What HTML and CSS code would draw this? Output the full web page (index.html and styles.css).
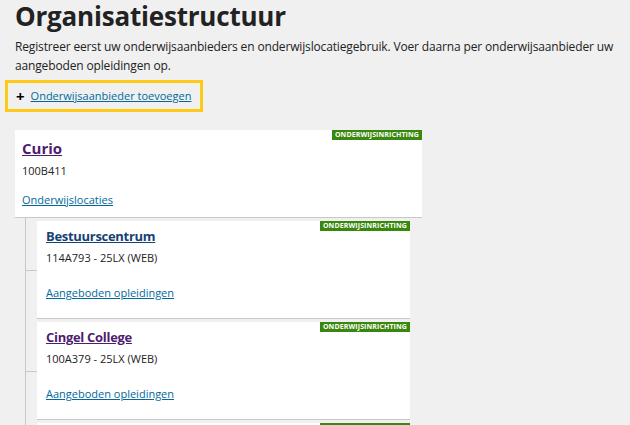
FILE: index.html
```html
<!DOCTYPE html>
<html lang="nl">
<head>
    <meta charset="UTF-8">
    <title>Organisatiestructuur</title>
    <link rel="stylesheet" href="styles.css">
</head>
<body>
    <div class="page">
        <h1>Organisatiestructuur</h1>
        <p class="intro">Registreer eerst uw onderwijsaanbieders en onderwijslocatiegebruik. Voer daarna per onderwijsaanbieder uw aangeboden opleidingen op.</p>

        <div class="add-box">
            <span class="plus">+</span>
            <a href="#" class="link">Onderwijsaanbieder toevoegen</a>
        </div>

        <!-- Tree of providers -->
        <div class="tree">
            <div class="card provider">
                <span class="badge">ONDERWIJSINRICHTING</span>
                <a href="#" class="card-title visited">Curio</a>
                <div class="code">100B411</div>
                <a href="#" class="link small">Onderwijslocaties</a>
            </div>

            <div class="children">
                <div class="card child">
                    <span class="badge">ONDERWIJSINRICHTING</span>
                    <a href="#" class="card-title">Bestuurscentrum</a>
                    <div class="code">114A793 - 25LX (WEB)</div>
                    <a href="#" class="link small">Aangeboden opleidingen</a>
                </div>
                <div class="card child">
                    <span class="badge">ONDERWIJSINRICHTING</span>
                    <a href="#" class="card-title visited">Cingel College</a>
                    <div class="code">100A379 - 25LX (WEB)</div>
                    <a href="#" class="link small">Aangeboden opleidingen</a>
                </div>
                <div class="card child">
                    <span class="badge">ONDERWIJSINRICHTING</span>
                    <a href="#" class="card-title visited">Da Vinci College</a>
                    <div class="code">100A380 - 25LX (WEB)</div>
                    <a href="#" class="link small">Aangeboden opleidingen</a>
                </div>
            </div>
        </div>
    </div>
</body>
</html>
```

FILE: styles.css
```css
body {
    margin: 0;
    background-color: #f0f0f0;
    font-family: "Open Sans", "Noto Sans", sans-serif;
    color: #222;
    overflow: hidden;
}
.page {
    padding: 0 15px;
}
h1 {
    margin: 0;
    padding-top: 1px;
    font-size: 26px;
    line-height: 31px;
    font-weight: 700;
    color: #222;
    letter-spacing: -0.2px;
}
.intro {
    margin: 5px 0 0;
    font-size: 12px;
    line-height: 19px;
    letter-spacing: -0.15px;
    color: #222;
}
.link {
    color: #01689b;
    font-size: 11px;
    text-decoration: underline;
}
.add-box {
    display: inline-flex;
    align-items: center;
    gap: 6px;
    margin: 5px 0 0 -10px;
    padding: 5px 9px 6px 8px;
    border: 3px solid #ffc917;
}
.plus {
    font-size: 15px;
    font-weight: 700;
    line-height: 14px;
    color: #000;
}
.tree {
    margin-top: 18px;
}
.card {
    position: relative;
    background-color: #fff;
    border-bottom: 1px solid #c8c8c8;
    display: flex;
    flex-direction: column;
    align-items: flex-start;
}
.provider {
    width: 393px;
    padding: 8px 7px 10px 7px;
}
.badge {
    position: absolute;
    top: 0;
    right: 0;
    background-color: #39870c;
    color: #fff;
    font-size: 7px;
    font-weight: 700;
    line-height: 10px;
    padding: 0 3px;
    letter-spacing: 0.1px;
}
.card-title {
    font-size: 15px;
    font-weight: 700;
    color: #154273;
    line-height: 20px;
}
.card-title.visited {
    color: #4e1d70;
}
.code {
    margin-top: 6px;
    font-size: 11px;
    line-height: 14px;
    color: #222;
}
.provider .link {
    margin-top: 14px;
}
.children {
    margin-left: 10px;
    border-left: 1px solid #c8c8c8;
    padding-left: 11px;
    padding-top: 3px;
}
.child {
    width: 355px;
    padding: 5px 9px 18px 9px;
    margin-bottom: 3px;
}
.child .card-title {
    font-size: 13px;
    line-height: 20px;
    letter-spacing: -0.3px;
}
.child .code {
    margin-top: 5px;
}
.child::before {
    content: "";
    position: absolute;
    left: -12px;
    top: 50%;
    width: 12px;
    height: 1px;
    background-color: #c8c8c8;
}
.child .link {
    margin-top: 20px;
}
```
